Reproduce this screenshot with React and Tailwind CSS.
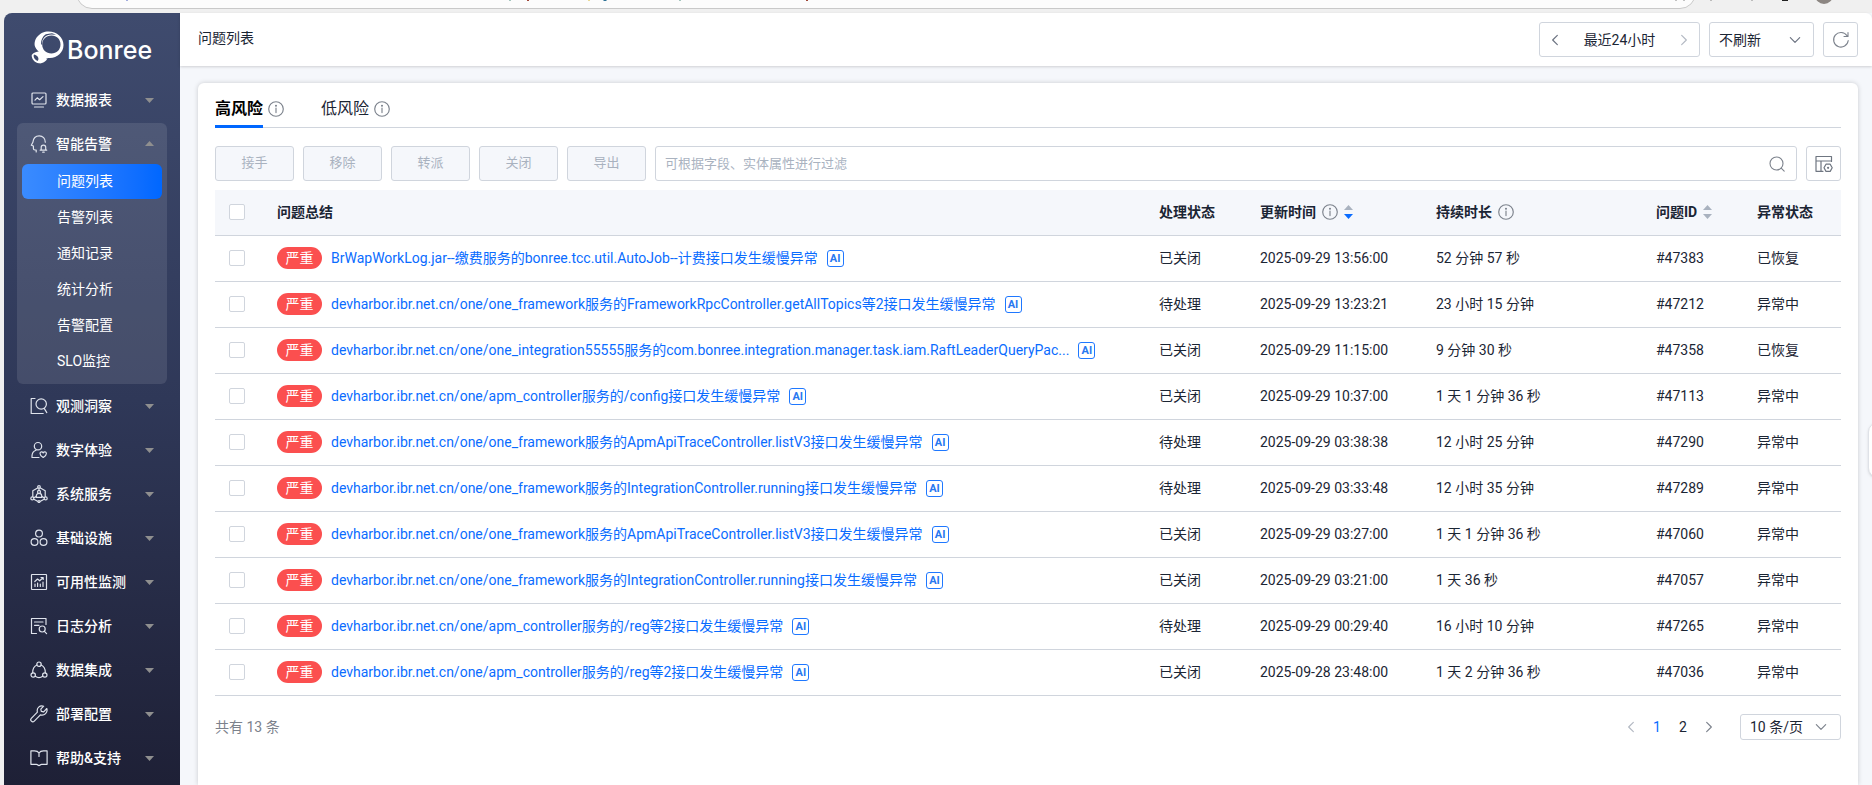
import { Fragment } from 'react';

function Icon({ children, size = 18, className = '', width = 1.2 }) {
  return (
    <svg
      width={size}
      height={size}
      viewBox="0 0 18 18"
      fill="none"
      stroke="currentColor"
      strokeWidth={width}
      strokeLinecap="round"
      strokeLinejoin="round"
      aria-hidden="true"
      className={`shrink-0 ${className}`}
    >
      {children}
    </svg>
  );
}

const icons = {
  report: (
    <>
      <rect x="2" y="2" width="14" height="11" rx="1" />
      <path d="M5 9.2 7.2 6.8l2.4 1.9L13 5.6M4.5 16h9" />
    </>
  ),
  alert: (
    <>
      <path d="M6.200 17v-2H4.800c-1 0-1.400-.5-1.400-1.400v-2.600L1.300 10.200l1.600-3C3.300 3.300 5.800.900 9.300.900c3.500 0 6 2.500 6 6.300" />
      <path d="M11.200 15v-2.700a2.250 2.250 0 0 1 4.500 0v2.700M10.200 15.200h6.500M12.700 17.200h1.500" />
    </>
  ),
  observe: (
    <>
      <path d="M5 1.500H1.200v15h12" />
      <circle cx="11.200" cy="7" r="5.200" />
      <path d="m14.200 11.400 2.600 4.200" />
    </>
  ),
  user: (
    <>
      <circle cx="8" cy="5.200" r="3.700" />
      <path d="M9 16.500H2v-1.500c0-3.200 1.600-5 4-5.800" />
      <path d="M13.200 16.500c-2.100-1.400-3.200-2.700-3.200-4 0-1.800 2.400-2.100 3.200-.6.800-1.500 3.200-1.200 3.200.6 0 1.300-1.100 2.600-3.200 4Z" />
    </>
  ),
  service: (
    <>
      <path d="m7.600 3-4.800 2.700v5.800M10.400 3l4.800 2.700v5.800M4.300 14.500 7.600 16.300M13.700 14.500l-3.300 1.800M9 3.200v2.500M3.800 12.800 6 11.600M14.200 12.800 12 11.600" />
      <circle cx="9" cy="1.900" r="1.300" />
      <circle cx="2.300" cy="13.400" r="1.500" />
      <circle cx="15.700" cy="13.400" r="1.500" />
      <circle cx="9" cy="16.500" r="1" />
      <path d="M6.300 12.400v-1.600c0-1.400.9-2.400 2.700-2.400s2.700 1 2.700 2.400v1.600Z" />
      <circle cx="9" cy="6.900" r="1.500" />
    </>
  ),
  infra: (
    <>
      <circle cx="9" cy="4.600" r="3.400" />
      <circle cx="4.500" cy="13" r="3.400" />
      <circle cx="13.500" cy="13" r="3.400" />
    </>
  ),
  monitor: (
    <>
      <rect x="1.500" y="1.500" width="15" height="15" rx=".5" />
      <path d="M5 13.500v-2.500M7.600 13.500V10M10.300 13.500v-2.500M13 13.500V9M4.800 8.500 7.500 6l2.200 1.800L13 4.700M11 4.500h2.200v2" />
    </>
  ),
  log: (
    <>
      <path d="M6.500 16.500H1.500V1.500H16v6M4.500 5h8.500M4.500 8.300h4.500" />
      <circle cx="12.200" cy="12" r="3" />
      <path d="m14.400 14.300 2.200 2.300" />
    </>
  ),
  data: (
    <>
      <circle cx="9" cy="3.200" r="2.200" />
      <circle cx="3.200" cy="14" r="2.200" />
      <circle cx="14.800" cy="14" r="2.200" />
      <path d="M7 4C4.200 5.200 2.600 8 2.700 11.800M11 4c2.800 1.200 4.400 4 4.300 7.800M5.300 15.200c2.200 1.600 5.200 1.600 7.400 0" />
    </>
  ),
  wrench: (
    <path d="M13.600 1.200c-3.700-1.200-7.300 1.800-6.200 5.900L1.300 13.300c-.8.900-.7 2.100.1 2.900.8.800 2 .8 2.900-.1l6.100-6.200c4.100 1.100 7.600-2.400 6.400-6.400l-3.100 3.300-2.400-.5-.5-2.200Z" />
  ),
  book: (
    <path d="M9 7.500V4C8 2.400 6.300 1.900 4.500 1.900H.900v13.400h5.600c1.200 0 1.500 1.400 2.500 1.400s1.300-1.400 2.500-1.400h5.600V1.900h-3.600C11.700 1.900 10 2.400 9 4" />
  ),
};

const menu = [
  { icon: 'report', label: '数据报表' },
  {
    icon: 'alert',
    label: '智能告警',
    children: ['问题列表', '告警列表', '通知记录', '统计分析', '告警配置', 'SLO监控'],
  },
  { icon: 'observe', label: '观测洞察' },
  { icon: 'user', label: '数字体验' },
  { icon: 'service', label: '系统服务' },
  { icon: 'infra', label: '基础设施' },
  { icon: 'monitor', label: '可用性监测' },
  { icon: 'log', label: '日志分析' },
  { icon: 'data', label: '数据集成' },
  { icon: 'wrench', label: '部署配置' },
  { icon: 'book', label: '帮助&支持' },
];

const rows = [
  ['BrWapWorkLog.jar--缴费服务的bonree.tcc.util.AutoJob--计费接口发生缓慢异常', '已关闭', '2025-09-29 13:56:00', '52 分钟 57 秒', '#47383', '已恢复'],
  ['devharbor.ibr.net.cn/one/one_framework服务的FrameworkRpcController.getAllTopics等2接口发生缓慢异常', '待处理', '2025-09-29 13:23:21', '23 小时 15 分钟', '#47212', '异常中'],
  ['devharbor.ibr.net.cn/one/one_integration55555服务的com.bonree.integration.manager.task.iam.RaftLeaderQueryPac...', '已关闭', '2025-09-29 11:15:00', '9 分钟 30 秒', '#47358', '已恢复'],
  ['devharbor.ibr.net.cn/one/apm_controller服务的/config接口发生缓慢异常', '已关闭', '2025-09-29 10:37:00', '1 天 1 分钟 36 秒', '#47113', '异常中'],
  ['devharbor.ibr.net.cn/one/one_framework服务的ApmApiTraceController.listV3接口发生缓慢异常', '待处理', '2025-09-29 03:38:38', '12 小时 25 分钟', '#47290', '异常中'],
  ['devharbor.ibr.net.cn/one/one_framework服务的IntegrationController.running接口发生缓慢异常', '待处理', '2025-09-29 03:33:48', '12 小时 35 分钟', '#47289', '异常中'],
  ['devharbor.ibr.net.cn/one/one_framework服务的ApmApiTraceController.listV3接口发生缓慢异常', '已关闭', '2025-09-29 03:27:00', '1 天 1 分钟 36 秒', '#47060', '异常中'],
  ['devharbor.ibr.net.cn/one/one_framework服务的IntegrationController.running接口发生缓慢异常', '已关闭', '2025-09-29 03:21:00', '1 天 36 秒', '#47057', '异常中'],
  ['devharbor.ibr.net.cn/one/apm_controller服务的/reg等2接口发生缓慢异常', '待处理', '2025-09-29 00:29:40', '16 小时 10 分钟', '#47265', '异常中'],
  ['devharbor.ibr.net.cn/one/apm_controller服务的/reg等2接口发生缓慢异常', '已关闭', '2025-09-28 23:48:00', '1 天 2 分钟 36 秒', '#47036', '异常中'],
];

function Info() {
  return (
    <Icon size={16} width={1.3} className="text-[#7c828c]">
      <circle cx="9" cy="9" r="8.200" />
      <path d="M9 8v5" />
      <circle cx="9" cy="5.300" r=".5" fill="currentColor" />
    </Icon>
  );
}

function Chevron({ dir, className = '' }) {
  const d = {
    left: 'M12 3 6 9l6 6',
    right: 'm6 3 6 6-6 6',
    down: 'm3 6 6 6 6-6',
  }[dir];
  return (
    <Icon size={14} width={1.5} className={className}>
      <path d={d} />
    </Icon>
  );
}

function Sorter({ active }) {
  return (
    <svg width="9" height="14" viewBox="0 0 9 14" aria-hidden="true">
      <path d="M4.500 0 9 5H0Z" fill="#a9b2bf" />
      <path d="M0 9h9l-4.500 5Z" fill={active ? '#0a6cff' : '#a9b2bf'} />
    </svg>
  );
}

function Caret({ open }) {
  return (
    <svg width="9" height="5" viewBox="0 0 9 5" aria-hidden="true" className="ml-auto fill-[#8f8f8f]">
      <path d={open ? 'M4.500 0 9 5H0Z' : 'M0 0h9L4.500 5Z'} />
    </svg>
  );
}

function Check({ label }) {
  return (
    <input
      type="checkbox"
      aria-label={label}
      className="block size-4 appearance-none rounded-xs border border-[#d0d5dd] bg-white checked:border-[#0a6cff] checked:bg-[#0a6cff]"
    />
  );
}

function BrowserEdge() {
  return (
    <div className="relative flex h-[13px] shrink-0 flex-col justify-end overflow-hidden bg-[#f0f0f0] pr-44 pb-1 pl-[76px]">
      <div className="h-8 shrink-0 rounded-full border border-[#c9c9c9] bg-[#fcfcfc]" />
      <svg className="absolute top-0 left-0 h-3 w-full" aria-hidden="true">
        <path d="M127 0v1" stroke="#4a5fc0" />
        <path d="M510 0v1M680 0v1" stroke="#4f8f80" />
        <path d="M528 0v1M807 0v1" stroke="#a04838" strokeWidth="2" />
        <path d="M589 0v1" stroke="#d8b830" />
        <path d="M605 0v1" stroke="#2f7396" strokeWidth="3" />
        <path d="M1676 0v1M1684 0v1M1711 0v1M1752 0v1" stroke="#888" />
        <path d="M1782 0h6" stroke="#222" strokeWidth="2" />
        <circle cx="1824" cy="-5" r="9" fill="#8c8682" />
      </svg>
    </div>
  );
}

function Logo() {
  return (
    <a href="#home" className="flex h-[65px] items-center gap-[3px] pt-1 pl-[27px] text-white">
      <svg width="33" height="33" viewBox="0 0 33 33" fill="currentColor" aria-hidden="true" className="shrink-0">
        <path
          fillRule="evenodd"
          d="M17.500.500c8.500 0 15 6.200 15 13.500 0 7.500-6.500 13.200-14 13-2 0-3.300.5-4 1.500L8.500 22c-1-2-3.200-3.600-4.300-6C1.800 8.500 8.500.500 17.500.500ZM20.500 4.500c-5.600 0-9.300 4-9.300 9 0 5.200 4 9 9.200 9 5.300 0 9.100-3.800 9.100-9 0-5.200-3.800-9-9-9Z"
        />
        <path d="M14.800 3.200 21 2.200l4.200 1.500-4.700-.3c-5.800 0-9.800 4-9.600 10.500l-.9-.8c0-4.300 1.500-7.700 4.800-9.900Z" fill="#3e4a6d" />
        <path
          fillRule="evenodd"
          d="M8.500 20.500 16 28.500c-2 2.500-5 4.300-8 3.800C3.500 31.500.5 28 .7 24c1.500-2 4.500-3.500 7.800-3.500ZM3 23.500c-1 1.700.2 5 3.500 6.500 2-1.500 1-5.500-3.500-6.500Z"
        />
      </svg>
      <span className="pt-1 font-[Inter,sans-serif] text-[25px] leading-8 font-medium">Bonree</span>
    </a>
  );
}

function MenuHead({ item, inset }) {
  return (
    <button
      type="button"
      aria-expanded={Boolean(item.children)}
      className={`flex w-full items-center gap-2 text-left font-medium ${inset ? 'h-[41px] px-[13px]' : 'h-11 px-[26px]'}`}
    >
      <Icon className="text-[#dfe3ec]">{icons[item.icon]}</Icon>
      <span>{item.label}</span>
      <Caret open={Boolean(item.children)} />
    </button>
  );
}

function Sidebar() {
  return (
    <aside className="w-44 shrink-0 rounded-tl-lg bg-linear-to-b from-[#3f4b6e] via-[#2f3858] to-[#1e2036] text-white">
      <Logo />
      <nav>
        {menu.map((item) => (
          <Fragment key={item.label}>
            {item.children ? (
              <div className="mx-[13px] mt-px rounded-md bg-white/10 pb-1">
                <MenuHead item={item} inset />
                <ul className="px-[5px]">
                  {item.children.map((child, i) => (
                    <li key={child} className="pb-px">
                      <a
                        href="#menu"
                        className={`flex h-[35px] items-center rounded-md pb-[2px] pl-[35px] ${i === 0 ? 'bg-linear-to-r from-[#3a8bff] to-[#0067ff]' : ''}`}
                      >
                        {child}
                      </a>
                    </li>
                  ))}
                </ul>
              </div>
            ) : (
              <MenuHead item={item} />
            )}
          </Fragment>
        ))}
      </nav>
    </aside>
  );
}

function Header() {
  return (
    <header className="z-10 flex h-[53px] items-center gap-[9px] rounded-tr-md bg-white pr-[14px] pl-[18px] shadow-[0_1px_3px_rgba(0,0,0,0.16)]">
      <h1 className="mr-auto pb-1">问题列表</h1>
      <div className="flex h-[35px] w-[161px] items-center justify-between rounded-[3px] border border-[#d0d5dd] px-2">
        <button type="button" aria-label="上一时段">
          <Chevron dir="left" className="text-[#6b7280]" />
        </button>
        <button type="button">最近24小时</button>
        <button type="button" aria-label="下一时段">
          <Chevron dir="right" className="text-[#b3b9c3]" />
        </button>
      </div>
      <div className="grid h-[35px] w-[105px] items-center rounded-[3px] border border-[#d0d5dd]">
        <select aria-label="刷新频率" className="col-start-1 row-start-1 h-full w-full appearance-none bg-transparent pl-[9px]">
          <option>不刷新</option>
        </select>
        <Chevron dir="down" className="pointer-events-none col-start-1 row-start-1 mr-[11px] justify-self-end text-[#6b7280]" />
      </div>
      <button type="button" aria-label="刷新" className="flex size-[35px] items-center justify-center rounded-[3px] border border-[#d0d5dd] text-[#7c828c]">
        <Icon width={1.1}>
          <path d="M16.200 9.500A7.300 7.300 0 1 1 15 4.700M16 1.500v4h-4" />
        </Icon>
      </button>
    </header>
  );
}

function Tabs() {
  return (
    <div role="tablist" className="flex h-[45px] gap-[37px] border-b border-[#d0d5dd] text-base">
      <div className="flex gap-[5px]">
        <button type="button" role="tab" aria-selected="true" className="-mb-px border-b-3 border-[#0067ff] pt-[9px] font-bold text-black">
          高风险
        </button>
        <span className="flex items-center pt-[7px]">
          <Info />
        </span>
      </div>
      <div className="flex gap-[5px]">
        <button type="button" role="tab" aria-selected="false" className="pt-[7px]">
          低风险
        </button>
        <span className="flex items-center pt-[7px]">
          <Info />
        </span>
      </div>
    </div>
  );
}

function Toolbar() {
  return (
    <div className="mt-[18px] flex gap-[9px]">
      {['接手', '移除', '转派', '关闭', '导出'].map((label) => (
        <button key={label} type="button" disabled className="h-[35px] w-[79px] rounded-[3px] border border-[#d0d5dd] bg-[#f5f7fb] text-[13px] text-[#a9b2bf]">
          {label}
        </button>
      ))}
      <div className="flex h-[35px] flex-1 items-center rounded-[3px] border border-[#d0d5dd] pr-[10px] pl-[9px]">
        <input aria-label="过滤" placeholder="可根据字段、实体属性进行过滤" className="h-full min-w-0 flex-1 text-[13px] outline-none placeholder:text-[#a9b2bf]" />
        <Icon className="text-[#7c828c]" width={1.1}>
          <circle cx="8.500" cy="8.500" r="6.500" />
          <path d="m13.200 13.200 3 3" />
        </Icon>
      </div>
      <button type="button" aria-label="列设置" className="flex size-[35px] items-center justify-center rounded-[3px] border border-[#d0d5dd] text-[#6f7681]">
        <Icon width={1.2}>
          <path d="M8 16.300H1V1.500h15.500v5M1 6h15.500M6 6v10.300" />
          <path d="M11 9.200h4.200l2 3.600-2 3.600H11l-2-3.600Z" />
          <circle cx="13.100" cy="12.800" r=".5" fill="currentColor" />
        </Icon>
      </button>
    </div>
  );
}

function ProblemTable() {
  return (
    <table className="mt-[9px] w-full table-fixed border-collapse text-left">
      <colgroup>
        <col className="w-12" />
        <col />
        <col className="w-[101px]" />
        <col className="w-44" />
        <col className="w-[220px]" />
        <col className="w-[101px]" />
        <col className="w-[98px]" />
      </colgroup>
      <thead className="bg-[#f5f7fb]">
        <tr className="h-[45px] border-b border-[#d0d5dd] [&>th]:px-[14px] [&>th]:font-bold">
          <th>
            <Check label="全选" />
          </th>
          <th>问题总结</th>
          <th>处理状态</th>
          <th>
            <span className="flex items-center gap-[6px]">
              更新时间
              <Info />
              <Sorter active />
            </span>
          </th>
          <th>
            <span className="flex items-center gap-[6px]">
              持续时长
              <Info />
            </span>
          </th>
          <th>
            <span className="flex items-center gap-[6px]">
              问题ID
              <Sorter />
            </span>
          </th>
          <th>异常状态</th>
        </tr>
      </thead>
      <tbody>
        {rows.map(([title, ...cells]) => (
          <tr key={cells[3]} className="h-[46px] border-b border-[#d0d5dd] [&>td]:px-[14px]">
            <td>
              <Check label={cells[3]} />
            </td>
            <td>
              <div className="flex items-center gap-[9px]">
                <span className="flex h-[22px] w-[45px] shrink-0 items-center justify-center rounded-full bg-[#fb4f4f] text-white">严重</span>
                <a href="#detail" className="truncate text-[#0a6cff]">
                  {title}
                </a>
                <span className="flex size-[17px] shrink-0 items-center justify-center rounded-[3px] border border-[#1f78ff] font-[Roboto,sans-serif] text-[11px] leading-none font-bold text-[#2878f0]">
                  AI
                </span>
              </div>
            </td>
            {cells.map((cell) => (
              <td key={cell} className="whitespace-nowrap">
                {cell}
              </td>
            ))}
          </tr>
        ))}
      </tbody>
    </table>
  );
}

function Pagination() {
  return (
    <div className="mt-[18px] flex items-center justify-between">
      <p className="text-[#7c828c]">共有 13 条</p>
      <nav aria-label="分页" className="flex items-center">
        <button type="button" aria-label="上一页" className="flex w-[26px] justify-center">
          <Chevron dir="left" className="text-[#b3b9c3]" />
        </button>
        <button type="button" aria-current="page" className="w-[26px] text-[#0a6cff]">
          1
        </button>
        <button type="button" className="w-[26px]">
          2
        </button>
        <button type="button" aria-label="下一页" className="flex w-[26px] justify-center">
          <Chevron dir="right" className="text-[#7c828c]" />
        </button>
        <div className="ml-[18px] grid h-[26px] w-[101px] items-center rounded-[3px] border border-[#d0d5dd]">
          <select aria-label="每页条数" className="col-start-1 row-start-1 h-full w-full appearance-none bg-transparent pl-[9px]">
            <option>10 条/页</option>
          </select>
          <Chevron dir="down" className="pointer-events-none col-start-1 row-start-1 mr-3 justify-self-end text-[#7c828c]" />
        </div>
      </nav>
    </div>
  );
}

export default function App() {
  return (
    <div className="relative flex min-h-screen flex-col overflow-hidden bg-[#f0f0f0] font-[Roboto,'Noto_Sans_CJK_SC',sans-serif] text-sm text-[#1b2534]">
      <BrowserEdge />
      <div className="flex flex-1 pl-1">
        <Sidebar />
        <div className="flex min-w-0 flex-1 flex-col bg-[#f5f7fb]">
          <Header />
          <main className="mt-[17px] mr-[14px] ml-[18px] flex-1 rounded-t-md bg-white px-[17px] shadow-[0_0_5px_rgba(0,0,0,0.18)]">
            <Tabs />
            <Toolbar />
            <ProblemTable />
            <Pagination />
          </main>
        </div>
      </div>
      <button type="button" aria-label="展开面板" className="absolute top-[422px] -right-4 h-14 w-5 rounded-2xl border border-[#dfe2e8] bg-white shadow-sm" />
    </div>
  );
}
